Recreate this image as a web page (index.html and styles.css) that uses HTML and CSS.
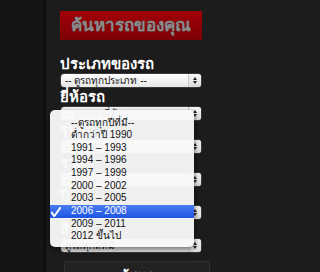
FILE: index.html
```html
<!DOCTYPE html>
<html lang="th">
<head>
<meta charset="utf-8">
<title>ค้นหารถของคุณ</title>
<link rel="stylesheet" href="styles.css">
</head>
<body>
<div class="page">
  <aside class="side"></aside>
  <main class="panel">
    <h1 class="title">ค้นหารถของคุณ</h1>
    <div class="field">
      <div class="label">ประเภทของรถ</div>
      <div class="select"><span class="val">-- ดูรถทุกประเภท --</span><span class="arrows"><i class="up"></i><i class="down"></i></span></div>
    </div>
    <div class="field">
      <div class="label">ยี่ห้อรถ</div>
      <div class="select"><span class="val">-- ดูรถทุกยี่ห้อ --</span><span class="arrows"><i class="up"></i><i class="down"></i></span></div>
    </div>
    <div class="field">
      <div class="label">รุ่นรถ</div>
      <div class="select"><span class="val">-- ดูรถทุกรุ่น --</span><span class="arrows"><i class="up"></i><i class="down"></i></span></div>
    </div>
    <div class="field">
      <div class="label">ราคา</div>
      <div class="select"><span class="val">-- ดูรถทุกราคา --</span><span class="arrows"><i class="up"></i><i class="down"></i></span></div>
    </div>
    <div class="field">
      <div class="label">ปีรถ</div>
      <div class="select"><span class="val">2006 – 2008</span><span class="arrows"><i class="up"></i><i class="down"></i></span></div>
    </div>
    <div class="field">
      <div class="label">สีรถ</div>
      <div class="select"><span class="val">ดูรถทุกสีที่มี</span><span class="arrows"><i class="up"></i><i class="down"></i></span></div>
    </div>
    <div class="button">ค้นหา</div>
    <ul class="menu">
      <li>--ดูรถทุกปีที่มี--</li>
      <li>ต่ำกว่าปี 1990</li>
      <li>1991 – 1993</li>
      <li>1994 – 1996</li>
      <li>1997 – 1999</li>
      <li>2000 – 2002</li>
      <li>2003 – 2005</li>
      <li class="sel"><svg class="check" width="10" height="10" viewBox="0 0 10 10"><path d="M0.8 5.6 L3.2 9.2 L9.4 0.6" fill="none" stroke="#fff" stroke-width="1.9" stroke-linecap="round" stroke-linejoin="round"/></svg>2006 – 2008</li>
      <li>2009 – 2011</li>
      <li>2012 ขึ้นไป</li>
    </ul>
  </main>
</div>
</body>
</html>
```

FILE: styles.css
```css
html, body {
  margin: 0;
  padding: 0;
  background: #1c1c1c;
  font-family: "Liberation Sans", "Noto Sans", sans-serif;
}
.page {
  display: flex;
  width: 212px;
  height: 272px;
  overflow: hidden;
  position: relative;
}
.side {
  width: 44px;
  flex: none;
  background: #141414;
  border-right: 2px solid #0d0d0d;
}
.panel {
  flex: 1;
  padding: 11px 0 0 14px;
  background: #1c1c1c;
}
.title {
  margin: 0 0 15px 0;
  width: 142px;
  height: 29px;
  background: linear-gradient(#a30008, #7c0004);
  color: #8a8a8a;
  font-size: 17px;
  font-weight: bold;
  line-height: 29px;
  text-align: center;
  text-shadow: 0 0 1px #555;
}
.field {
  display: flex;
  flex-direction: column;
}
.label {
  height: 18px;
  line-height: 18px;
  color: #fff;
  font-size: 15px;
  font-weight: bold;
  white-space: nowrap;
}
.select {
  box-sizing: border-box;
  width: 142px;
  height: 15px;
  border-radius: 4px;
  background: linear-gradient(#ffffff, #e6e6e6);
  border: 1px solid #3a3a3a;
  display: flex;
  align-items: center;
  font-size: 10px;
  color: #111;
}
.val {
  flex: 1;
  padding-left: 4px;
  white-space: nowrap;
  overflow: hidden;
}
.arrows {
  width: 12px;
  height: 13px;
  border-left: 1px solid #c8c8c8;
  background: linear-gradient(#f8f8f8, #dcdcdc);
  border-radius: 0 3px 3px 0;
  display: flex;
  flex-direction: column;
  align-items: center;
  justify-content: center;
  gap: 1px;
}
.up, .down {
  width: 0;
  height: 0;
  border-left: 2px solid transparent;
  border-right: 2px solid transparent;
}
.up { border-bottom: 3px solid #222; }
.down { border-top: 3px solid #222; }
.button {
  margin: 8px 0 0 4px;
  width: 146px;
  height: 30px;
  box-sizing: border-box;
  background: #222;
  border: 1px solid #2f2f2f;
  color: #fff;
  font-size: 13px;
  font-weight: bold;
  text-align: center;
  line-height: 28px;
}
.menu {
  position: absolute;
  left: 50px;
  top: 110px;
  width: 144px;
  height: 137px;
  box-sizing: border-box;
  margin: 0;
  padding: 6.5px 0 0 0;
  list-style: none;
  background: rgba(248, 248, 248, 0.96);
  border-radius: 5px;
  box-shadow: 0 2px 6px rgba(0, 0, 0, 0.6);
  font-size: 10px;
  color: #111;
}
.menu li {
  height: 12.67px;
  line-height: 12.67px;
  padding-left: 21px;
  position: relative;
  white-space: nowrap;
}
.menu li.sel {
  background: linear-gradient(#4a7cf0, #1f55e4);
  color: #fff;
}
.check {
  position: absolute;
  left: 1px;
  top: 2px;
}
```
